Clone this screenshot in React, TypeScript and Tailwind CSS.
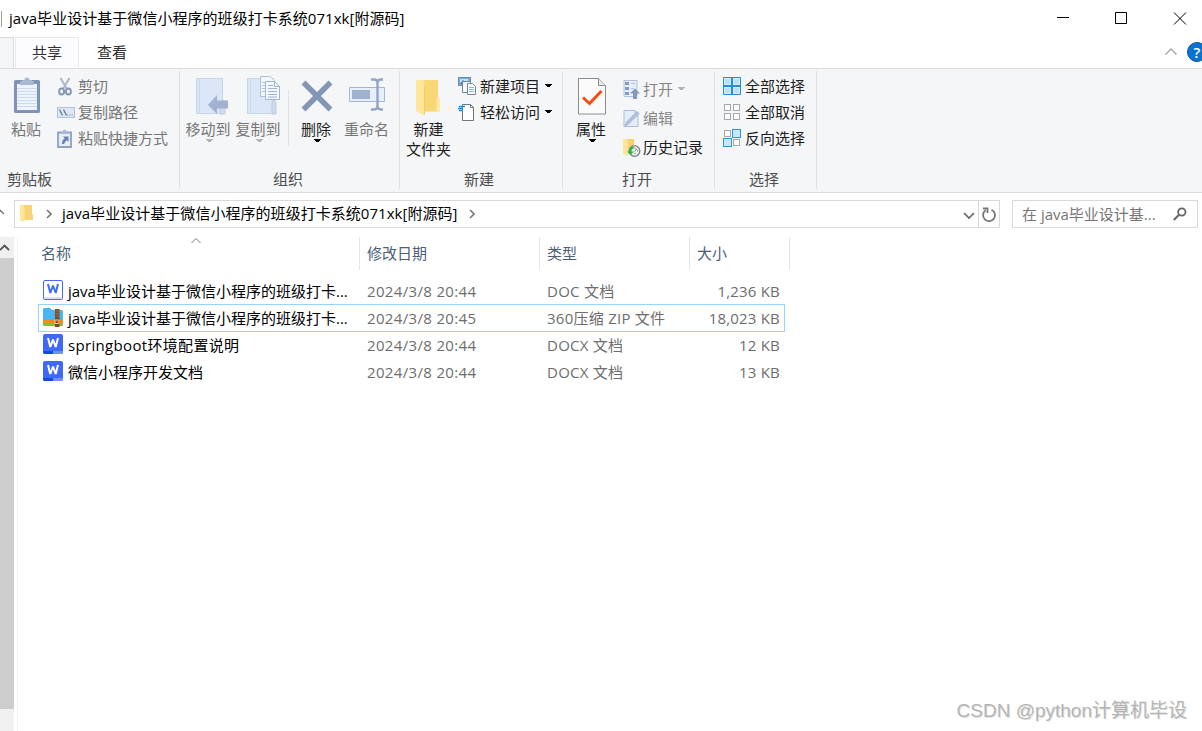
import React from 'react';

type Kids = { children?: React.ReactNode };

function Caret({ className = 'text-black' }: { className?: string }) {
  return (
    <svg width="7" height="4" viewBox="0 0 7 4" className={className} shapeRendering="crispEdges">
      <path d="M0 0h7v1H6v1H5v1H2V2H1V1H0z" fill="currentColor" />
    </svg>
  );
}

function PasteIcon() {
  return (
    <svg width="28" height="38" viewBox="0 0 28 38">
      <rect x="1" y="4" width="26" height="33" rx="1.500" fill="#8193b6" />
      <rect x="4" y="8" width="20" height="26" fill="#eef4fd" />
      <path d="M4 12.500h20M4 15.500h20M4 18.500h20M4 21.500h20M4 24.500h20M4 27.500h20M4 30.500h20" stroke="#ccd9ef" />
      <path d="M7 9V6l3-2h1.500a2.500 2.500 0 0 1 5 0H18l3 2v3z" fill="#a9b8d3" />
    </svg>
  );
}

function ScissorsIcon() {
  return (
    <svg width="14" height="19" viewBox="0 0 14 19" fill="none">
      <path d="M2.500 1 9 12M11.500 1 5 12" stroke="#a9b8cf" strokeWidth="2" />
      <ellipse cx="3.600" cy="14.500" rx="2.500" ry="3" stroke="#8495b5" strokeWidth="1.900" />
      <ellipse cx="10.400" cy="14.500" rx="2.500" ry="3" stroke="#8495b5" strokeWidth="1.900" />
    </svg>
  );
}

function PathIcon() {
  return (
    <svg width="18" height="11" viewBox="0 0 18 11" fill="none">
      <rect x=".5" y=".5" width="17" height="10" fill="#dde7f5" stroke="#b3c1d9" />
      <path d="m2.500 2.500 3 6M6.500 2.500l3 6" stroke="#6b7fa5" strokeWidth="1.400" />
      <path d="M10 8h1M12.300 8h1M14.600 8h1" stroke="#6b7fa5" strokeWidth="1.200" />
    </svg>
  );
}

function PasteShortcutIcon() {
  return (
    <svg width="15" height="19" viewBox="0 0 15 19" fill="none">
      <path d="M1 3.500h13V18H1z" fill="#e5edf9" stroke="#8fa0c0" strokeWidth="1.800" />
      <path d="M4 5V3l2-1a1.500 1.500 0 0 1 3 0l2 1v2z" fill="#a9b8d3" />
      <path d="M6 7.500h5.500V13l-1.700-1.700C8.300 12.500 7.500 13.500 7.300 15H5c0-2.700 1-4.300 2.700-5.700z" fill="#6b80aa" />
    </svg>
  );
}

function MoveIcon() {
  return (
    <svg width="33" height="40" viewBox="0 0 33 40">
      <rect x=".5" y="1.500" width="26" height="35" fill="#dbe6f6" stroke="#c7d5ea" />
      <path d="M3.500 1v36" stroke="#cad8ed" />
      <path d="M24 37V26q0-3 2.500-3t2.500 3v11z" fill="#cfdcf0" stroke="#bdcce4" />
      <path d="m12 28 9-10v5.500h11v8H21V37z" fill="#a3b2ce" />
    </svg>
  );
}

function CopyIcon() {
  return (
    <svg width="34" height="40" viewBox="0 0 34 40">
      <rect x=".5" y="2.500" width="26" height="35" fill="#dbe6f6" stroke="#c7d5ea" />
      <path d="M3.500 2v36" stroke="#cad8ed" />
      <path d="M25 38V27q0-2.500 2-2.500t2 2.500v11z" fill="#cfdcf0" stroke="#bdcce4" />
      <path d="M13.500.5h10l4 4v16h-14z" fill="#f3f8ff" stroke="#adc0dd" />
      <path d="M15 6.500h9M15 9.500h9M15 12.500h9M15 15.500h9" stroke="#adc0dd" />
      <path d="M18.500 5.500h9l5 5v13h-14z" fill="#f3f8ff" stroke="#9fb4d6" />
      <path d="M27.500 5.500v5h5M21 9.500h5M21 12.500h9M21 15.500h9M21 18.500h9M21 21h9" fill="none" stroke="#9fb4d6" />
    </svg>
  );
}

function DeleteIcon() {
  return (
    <svg width="34" height="34" viewBox="0 0 34 34">
      <path d="M3.500 3.500 30.500 30.500M30.500 3.500 3.500 30.500" stroke="#8496b6" strokeWidth="5.500" />
    </svg>
  );
}

function RenameIcon() {
  return (
    <svg width="38" height="36" viewBox="0 0 38 36" fill="none">
      <path d="M1.500 10.500h35v14h-35z" fill="#e6effb" stroke="#a3b6d6" />
      <path d="M4 13h18v9H4z" fill="#a1b2d0" />
      <path d="M23 2.500h3q3.500 0 3.500 4v22q0 4-3.500 4h-3M35 2.500h-2q-3.500 0-3.500 4v22q0 4 3.500 4h2" stroke="#93a5c4" strokeWidth="2.400" />
    </svg>
  );
}

function NewFolderIcon() {
  return (
    <svg width="25" height="36" viewBox="0 0 25 36">
      <path d="M6 0h16v18l2 2v10q0 1.500-1.500 1.500H6z" fill="#f8d775" />
      <path d="M20.500 18H24v12q0 1-1 1h-2.500z" fill="#ffe9a4" />
      <path d="M0 0h7q1.500 2.500 1.500 5v30.500L0 31z" fill="#ffe69b" />
      <path d="M8.500 5v30" stroke="#f3ce69" />
    </svg>
  );
}

function NewItemIcon() {
  return (
    <svg width="19" height="19" viewBox="0 0 19 19">
      <path d="M.5.500h12v8H.5z" fill="#69b5e9" stroke="#72879d" />
      <path d="M2 2h8v4H2z" fill="#bfe5fb" />
      <path d="m2 7 3-4 4 4z" fill="#44708f" />
      <path d="M4.500 4.500h8v11h-8z" fill="#f8fafc" stroke="#718399" />
      <path d="M9.500 6.500h5l3 3v8h-8z" fill="#fff" stroke="#71869d" />
      <path d="M11 10.500h5M11 12.500h5M11 14.500h5" stroke="#87b8df" />
    </svg>
  );
}

function EasyAccessIcon() {
  return (
    <svg width="18" height="19" viewBox="0 0 18 19" fill="none">
      <path d="M4.500 1.500h8l3 3v13h-11z" fill="#fff" stroke="#71777e" />
      <path d="M12.500 1.500v3h3" stroke="#71777e" />
      <path d="M1 3.500h6M0 5.500h5M1 7.500h3" stroke="#2489d5" strokeWidth="1.300" />
    </svg>
  );
}

function PropertiesIcon() {
  return (
    <svg width="28" height="37" viewBox="0 0 28 37" fill="none">
      <path d="M.5.500h20l7 7v28.500H.5z" fill="#fbfbfb" stroke="#8c8c8c" />
      <path d="M20.500.500v7h7" fill="#e7e7e7" stroke="#8c8c8c" />
      <path d="m5 19.500 6.500 6L23.500 13" stroke="#f04e10" strokeWidth="3" />
    </svg>
  );
}

function OpenIcon() {
  return (
    <svg width="17" height="19" viewBox="0 0 17 19" fill="none">
      <path d="M1 .5h13v16H1z" fill="#e6eefa" stroke="#b0bfd9" />
      <path d="M2 2h4v3H2zM2 7h4v3H2zM2 12h4v3H2z" fill="#8598bd" />
      <path d="M8 3.500h4M8 8.500h3" stroke="#adc0de" />
      <path d="m12 8.500 5 5h-3V19h-4v-5.500H7z" fill="#8598b9" />
    </svg>
  );
}

function EditIcon() {
  return (
    <svg width="17" height="19" viewBox="0 0 17 19" fill="none">
      <path d="M1 1.500h11l3 3v13H1z" fill="#e4edfa" stroke="#afbfda" />
      <path d="M12 1.500v3h3" stroke="#afbfda" />
      <path d="m2 17 1.500-4L14 2.500l2 2L5.500 15z" fill="#b2c1da" stroke="#98aaca" strokeWidth=".7" />
    </svg>
  );
}

function HistoryIcon() {
  return (
    <svg width="18" height="19" viewBox="0 0 18 19" fill="none">
      <path d="M3 1h8v6l2 2v7H3z" fill="#f5d16c" />
      <path d="M0 1h4l1 2v15l-5-2z" fill="#ffe59a" />
      <circle cx="11.500" cy="13" r="5.300" fill="#eef0ef" stroke="#77837e" strokeWidth="1.300" />
      <path d="M11.500 13l2.500-2M12 9.500v1M15 13h-1M12 16v-1" stroke="#64716c" />
      <path d="M10 8.500q-4 1-4 5H4L7.500 17l3.500-3.500H8.500q0-2.500 3-3.500z" fill="#2fb646" />
    </svg>
  );
}

function SelectIcon({ mode }: { mode: 'all' | 'none' | 'invert' }) {
  const cells = [[0, 0], [1, 0], [0, 1], [1, 1]];
  if (mode === 'all') {
    return (
      <svg width="18" height="18" viewBox="0 0 18 18">
        <path d="M.5.500h17v17H.5z" fill="#b9e1fb" stroke="#268ed9" />
        <path d="M9 0v18M0 9h18" stroke="#268ed9" strokeWidth="2" />
        <path d="M1.500 1.500h6v6h-6zM10.500 1.500h6v6h-6zM1.500 10.500h6v6h-6zM10.500 10.500h6v6h-6z" fill="none" stroke="#d5effd" />
      </svg>
    );
  }
  return (
    <svg width="18" height="18" viewBox="0 0 18 18">
      {cells.map(([x, y]) => {
        const on = mode === 'invert' && x !== y;
        return (
          <rect
            key={`${x}${y}`}
            x={on ? x * 9 + 0.5 : x * 9 + 1.5}
            y={on ? y * 9 + 0.5 : y * 9 + 1.5}
            width={on ? 8 : 6}
            height={on ? 8 : 6}
            fill={on ? '#c6e7fc' : '#fdfdfd'}
            stroke={on ? '#2d93dc' : '#a4a8ac'}
          />
        );
      })}
    </svg>
  );
}

function FolderIcon() {
  return (
    <svg width="13" height="17" viewBox="0 0 13 17">
      <path d="M3 0h9v9l1 1v5H3z" fill="#f8d477" />
      <path d="M0 0h3l1.500 2.500V17L0 15z" fill="#ffe69d" />
    </svg>
  );
}

function WordIcon({ outline = false }: { outline?: boolean }) {
  return (
    <svg width="20" height="20" viewBox="0 0 20 20" fill="none">
      {outline ? (
        <>
          <rect x=".5" y=".5" width="19" height="19" rx="1.500" fill="#fff" stroke="#416cf3" />
          <path d="M1 17h18v2H1z" fill="#d9e2fc" />
        </>
      ) : (
        <>
          <rect width="20" height="20" rx="2" fill="#3f68f7" />
          <path d="M0 17h10v3H2q-2 0-2-2z" fill="#1149df" />
          <path d="M10 17h10v1q0 2-2 2h-8z" fill="#6e90fa" />
        </>
      )}
      <path d="m5 4 2.300 9L10 5.500l2.700 7.500L15 4" stroke={outline ? '#416cf3' : '#fff'} strokeWidth="2" strokeLinejoin="bevel" />
    </svg>
  );
}

function ZipIcon() {
  return (
    <svg width="20" height="20" viewBox="0 0 20 20">
      <path d="M0 2.500Q0 1 1.500 1H7l2 2h9.500Q20 3 20 4.500V15H0z" fill="#49b5f2" />
      <path d="M0 13h20v3H0z" fill="#fa8a1c" />
      <path d="M0 16h20v1.500q0 1.500-1.500 1.500h-17Q0 19 0 17.500z" fill="#7cc531" />
      <path d="M12 2h4.500v18H12z" fill="#7b4a2b" />
      <path d="M12.500 4h3.500M12.500 6.500h3.500M12.500 9h3.500" stroke="#a96d43" />
      <path d="M12 13h4v3.500h-4z" fill="#8b5633" stroke="#f5c77e" />
    </svg>
  );
}

function Group({ label, width, children }: Kids & { label: string; width: string }) {
  return (
    <section className={`flex h-[118px] shrink-0 flex-col border-r border-[#e0e1e3] ${width}`}>
      <div className="flex h-[98px] items-start">{children}</div>
      <div className="text-center leading-[20px] text-[#4c4c4c]">{label}</div>
    </section>
  );
}

function BigButton({ icon, label, className = '', caret }: { icon: React.ReactNode; label: React.ReactNode; className?: string; caret?: string }) {
  return (
    <div className={`flex shrink-0 flex-col items-center whitespace-nowrap leading-[20px] ${className}`}>
      <div className="flex h-[42px] items-start justify-center">{icon}</div>
      <span>{label}</span>
      {caret && <span className="ml-[3px]"><Caret className={caret} /></span>}
    </div>
  );
}

function SmallButton({ icon, label, className = '', caret }: { icon: React.ReactNode; label: string; className?: string; caret?: string }) {
  return (
    <div className={`flex h-[26px] items-center whitespace-nowrap leading-[20px] ${className}`}>
      <span className="flex w-[21px] shrink-0 items-center">{icon}</span>
      <span>{label}</span>
      {caret && <span className="ml-[5px]"><Caret className={caret} /></span>}
    </div>
  );
}

const files = [
  { kind: 'doc', name: 'java毕业设计基于微信小程序的班级打卡...', date: '2024/3/8 20:44', type: 'DOC 文档', size: '1,236 KB' },
  { kind: 'zip', name: 'java毕业设计基于微信小程序的班级打卡...', date: '2024/3/8 20:45', type: '360压缩 ZIP 文件', size: '18,023 KB' },
  { kind: 'docx', name: 'springboot环境配置说明', date: '2024/3/8 20:44', type: 'DOCX 文档', size: '12 KB' },
  { kind: 'docx', name: '微信小程序开发文档', date: '2024/3/8 20:44', type: 'DOCX 文档', size: '13 KB' },
];

export default function App() {
  return (
    <div className="flex h-[731px] w-[1202px] flex-col overflow-hidden bg-white font-['Open_Sans','Noto_Sans_CJK_SC',sans-serif] text-[15px] text-black">
      <header className="flex h-[37px] shrink-0 items-center">
        <div className="ml-px h-4 w-px bg-[#a0a0a0]" />
        <h1 className="-mt-[2px] ml-[7px] flex-1 whitespace-nowrap leading-[20px] tracking-[0.04px]">java毕业设计基于微信小程序的班级打卡系统071xk[附源码]</h1>
        <svg width="130" height="14" viewBox="0 0 130 14" fill="none" stroke="#000" className="mr-[15px]">
          <path d="M0 5.500h12M58.500.500h11v11h-11z" />
          <path d="m117 .5 12 12M129 .5l-12 12" />
        </svg>
      </header>

      <nav className="flex h-8 shrink-0 border-b border-[#dadbdc] leading-[20px] text-[#303030]">
        <div className="w-[14px] border-t border-r border-[#dadbdc] bg-[#f5f6f7]" />
        <div className="ml-px flex w-[64px] items-center justify-center border border-b-0 border-[#e8e9ec] bg-[#fcfcff] pb-[3px]">共享</div>
        <div className="ml-[18px] flex items-center pb-[2px]">查看</div>
        <div className="ml-auto flex items-center pb-[2px]">
          <svg width="12" height="7" viewBox="0 0 12 7" fill="none" className="mr-[10px]">
            <path d="m.5 6.500 5.500-5.500 5.500 5.500" stroke="#a2a2a2" strokeWidth="1.400" />
          </svg>
          <div className="flex w-[15px] overflow-hidden">
            <span className="flex size-5 shrink-0 items-center justify-center rounded-full border border-[#17548b] bg-[#0873d2] text-[15px] font-semibold text-white">?</span>
          </div>
        </div>
      </nav>

      <div className="flex h-[124px] shrink-0 border-b border-[#d9dadb] bg-[#f5f6f8] pt-[2px] text-[#1e1e1e]">
        <section className="flex h-[118px] w-[180px] shrink-0 flex-col border-r border-[#e0e1e3]">
          <div className="flex h-[98px]">
            <BigButton className="w-[53px] pt-[6px] text-[#767676]" icon={<span className="-mt-px"><PasteIcon /></span>} label={<span className="-ml-px">粘贴</span>} />
            <div className="ml-1 flex flex-col pt-[2px] text-[#767676]">
              <SmallButton icon={<span className="ml-px"><ScissorsIcon /></span>} label="剪切" />
              <SmallButton icon={<PathIcon />} label="复制路径" />
              <SmallButton icon={<PasteShortcutIcon />} label="粘贴快捷方式" />
            </div>
          </div>
          <div className="pl-[7px] leading-[20px] text-[#4c4c4c]">剪贴板</div>
        </section>

        <Group label="组织" width="w-[220px] pr-[3px]">
          <BigButton className="ml-[3px] w-[50px] pt-[6px] text-[#767676]" icon={<span className="ml-[8px]"><MoveIcon /></span>} label="移动到" caret="text-[#b3b3b3]" />
          <BigButton className="w-[50px] pt-[6px] text-[#767676]" icon={<span className="-mt-px ml-[11px]"><CopyIcon /></span>} label="复制到" caret="text-[#b3b3b3]" />
          <div className="mt-[19px] ml-[5px] h-[56px] w-px bg-[#e0e1e3]" />
          <BigButton className="w-[54px] pt-[6px]" icon={<span className="mt-[2px] ml-[2px]"><DeleteIcon /></span>} label="删除" caret="text-black" />
          <BigButton className="w-[47px] pt-[6px] text-[#767676]" icon={<span className="ml-px"><RenameIcon /></span>} label="重命名" />
        </Group>

        <Group label="新建" width="w-[163px] pr-1">
          <BigButton className="w-[57px] pt-[6px]" icon={<span className="mt-[3px] -ml-px"><NewFolderIcon /></span>} label={<span className="block text-center">新建<br />文件夹</span>} />
          <div className="ml-[2px] flex flex-col pt-[2px]">
            <SmallButton icon={<span className="-ml-px"><NewItemIcon /></span>} label="新建项目" caret="text-black" />
            <SmallButton icon={<span className="-ml-px"><EasyAccessIcon /></span>} label="轻松访问" caret="text-black" />
          </div>
        </Group>

        <Group label="打开" width="w-[152px] pr-[3px]">
          <BigButton className="w-[56px] pt-[6px]" icon={<span className="mt-px ml-[2px]"><PropertiesIcon /></span>} label="属性" caret="text-black" />
          <div className="ml-[3px] flex flex-col gap-[3px] pt-[5px]">
            <SmallButton className="text-[#858585]" icon={<span className="ml-px"><OpenIcon /></span>} label="打开" caret="text-[#b3b3b3]" />
            <SmallButton className="text-[#858585]" icon={<span className="ml-px"><EditIcon /></span>} label="编辑" />
            <SmallButton icon={<span className="ml-px"><HistoryIcon /></span>} label="历史记录" />
          </div>
        </Group>

        <Group label="选择" width="w-[102px] pr-[3px]">
          <div className="ml-[9px] flex flex-col pt-[2px]">
            <SmallButton icon={<span className="-ml-px"><SelectIcon mode="all" /></span>} label="全部选择" />
            <SmallButton icon={<span className="-ml-px"><SelectIcon mode="none" /></span>} label="全部取消" />
            <SmallButton icon={<span className="-ml-px"><SelectIcon mode="invert" /></span>} label="反向选择" />
          </div>
        </Group>
      </div>

      <div className="flex h-[44px] shrink-0 items-start pt-[7px]">
        <div className="flex h-[28px] w-[14px] items-center">
          <svg width="5" height="6" viewBox="0 0 5 6" fill="none" className="-mt-1">
            <path d="m-2 5 2.500-3.500L4 5" stroke="#777" strokeWidth="1.400" />
          </svg>
        </div>
        <div className="flex h-[28px] w-[986px] items-center border border-[#d9d9d9]">
          <span className="-mt-[2px] ml-[5px]"><FolderIcon /></span>
          <svg width="6" height="10" viewBox="0 0 6 10" fill="none" className="ml-[13px]">
            <path d="m1 1 4 4-4 4" stroke="#777" strokeWidth="1.600" />
          </svg>
          <span className="-mt-[2px] ml-[10px] whitespace-nowrap leading-[20px] tracking-[0.04px]">java毕业设计基于微信小程序的班级打卡系统071xk[附源码]</span>
          <svg width="6" height="10" viewBox="0 0 6 10" fill="none" className="ml-[11px]">
            <path d="m1 1 4 4-4 4" stroke="#777" strokeWidth="1.600" />
          </svg>
          <svg width="12" height="8" viewBox="0 0 12 8" fill="none" className="mt-[3px] mr-[3px] ml-auto">
            <path d="m1 1 5 5 5-5" stroke="#666" strokeWidth="1.700" />
          </svg>
          <div className="flex h-full w-[21px] items-center justify-center border-l border-[#d9d9d9]">
            <svg width="16" height="17" viewBox="0 0 16 17" fill="none" stroke="#777" strokeWidth="1.800">
              <path d="M10.500 3.700A6 6 0 1 1 4.700 4.200" />
              <path d="M2 2.500h4.500v4.500" />
            </svg>
          </div>
        </div>
        <div className="ml-[12px] flex h-[28px] w-[186px] items-center border border-[#d9d9d9] pl-[9px] leading-[20px] text-[#757575]">
          <span className="whitespace-nowrap">在 java毕业设计基...</span>
          <svg width="14" height="14" viewBox="0 0 14 14" fill="none" stroke="#666" className="mr-[10px] ml-auto">
            <circle cx="8.800" cy="5" r="3.700" strokeWidth="1.800" />
            <path d="M6 7.800.8 13" strokeWidth="2" />
          </svg>
        </div>
      </div>

      <main className="flex min-h-0 flex-1">
        <div className="flex w-[14px] flex-col bg-[#f0f0f0]">
          <div className="flex h-[21px] items-center">
            <svg width="10" height="8" viewBox="0 0 10 8" fill="none">
              <path d="m0 6 4.500-4.500L9 6" stroke="#555" strokeWidth="1.900" />
            </svg>
          </div>
          <div className="h-[451px] bg-[#cdcdcd]" />
        </div>
        <div className="ml-[3px] w-px bg-[#f3f3f3]" />
        <div className="relative ml-[20px] w-[752px]">
          <svg width="10" height="6" viewBox="0 0 10 6" fill="none" className="absolute top-px left-[153px]">
            <path d="m.5 5 4.500-4.500L9.500 5" stroke="#777" />
          </svg>
          <div className="flex h-[33px] leading-[33px] text-[#4c607a]">
            <div className="w-[322px] border-r border-[#e5e5e5] pl-[3px]">名称</div>
            <div className="w-[180px] border-r border-[#e5e5e5] pl-[7px]">修改日期</div>
            <div className="w-[150px] border-r border-[#e5e5e5] pl-[7px]">类型</div>
            <div className="w-[100px] border-r border-[#e5e5e5] pl-[7px]">大小</div>
          </div>
          <div className="mt-[7px]">
            {files.map((f, i) => (
              <div
                key={i}
                className={`flex w-[747px] items-center border whitespace-nowrap leading-[20px] ${i === 1 ? 'h-[28px] border-[#99d1ff]' : 'h-[27px] border-transparent'} ${i === 2 ? '-mt-px' : ''}`}
              >
                <span className={`ml-[4px] w-[25px] ${i === 1 ? '-mt-[3px]' : '-mt-px'}`}>{f.kind === 'zip' ? <ZipIcon /> : <WordIcon outline={f.kind === 'doc'} />}</span>
                <span className={`w-[299px] ${i === 2 ? 'tracking-[0.33px]' : ''}`}>{f.name}</span>
                <span className="w-[180px] tracking-[0.34px] text-[#6d6d6d]">{f.date}</span>
                <span className="w-[130px] tracking-[0.25px] text-[#6d6d6d]">{f.type}</span>
                <span className="w-[103px] text-right tracking-[0.2px] text-[#6d6d6d]">{f.size}</span>
              </div>
            ))}
          </div>
        </div>
        <div className="mr-[15px] mb-[7px] ml-auto self-end whitespace-nowrap font-['Liberation_Sans','Noto_Sans_CJK_SC',sans-serif] text-[19px] leading-[26px] text-[#b4b4b4] [text-shadow:1px_1px_0_#a0a0a050]">
          CSDN @python计算机毕设
        </div>
      </main>
    </div>
  );
}
